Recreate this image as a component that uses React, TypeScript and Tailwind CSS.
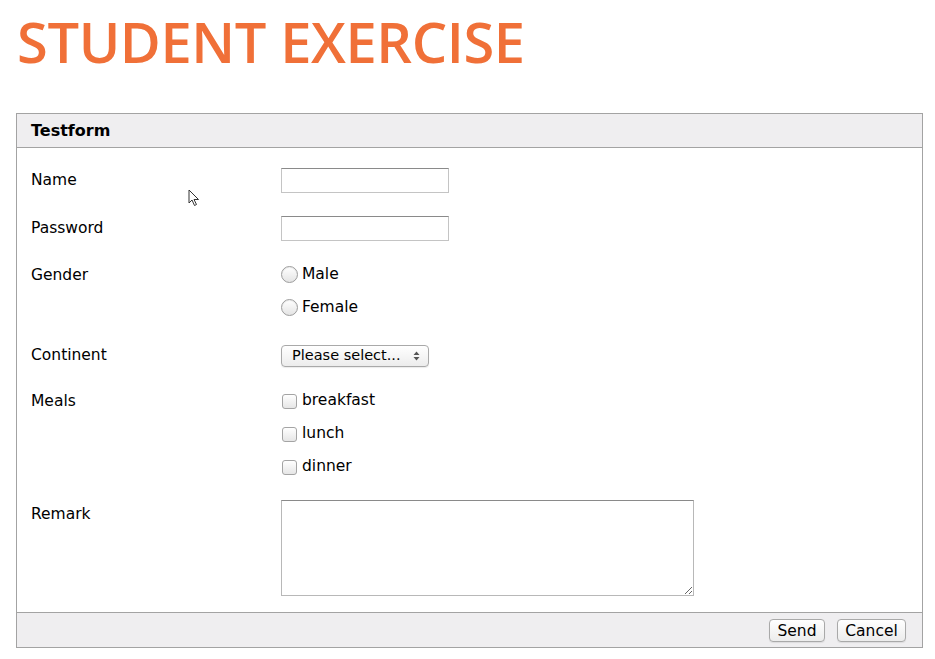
import React from "react";

const labelCls = "w-[250px] shrink-0 text-[15.5px] text-black";

function Radio({ label }: { label: string }) {
  return (
    <label className="flex h-[24px] items-center">
      <span className="-mt-[1px] h-[17px] w-[17px] rounded-full border border-[#9c9c9c] bg-gradient-to-b from-white to-[#e4e4e4] shadow-[inset_0_1px_1px_rgba(0,0,0,0.08)]" />
      <span className="ml-[4px] text-[15.5px] text-black">{label}</span>
    </label>
  );
}

function Check({ label }: { label: string }) {
  return (
    <label className="flex h-[24px] items-center">
      <span className="ml-[1px] h-[15px] w-[15px] rounded-[3px] border border-[#a4a4a4] bg-gradient-to-b from-white to-[#e6e6e6]" />
      <span className="ml-[5px] text-[15.5px] text-black">{label}</span>
    </label>
  );
}

function Cursor() {
  return (
    <svg className="absolute left-[188px] top-[189px]" width="12" height="18" viewBox="0 0 12 18">
      <path d="M1 1 L1 14 L4 11 L6.5 16.5 L8.5 15.5 L6 10.5 L10.5 10.5 Z" fill="white" stroke="#333" strokeWidth="1" strokeLinejoin="round" />
    </svg>
  );
}

export default function App() {
  return (
    <div className="relative h-[659px] w-[935px] bg-white font-['DejaVu_Sans',sans-serif]">
      <h1 className="pl-[17px] pt-[5px] font-['Open_Sans',sans-serif] text-[56px] font-semibold leading-[72px] tracking-[-0.4px] text-[#f07038]">
        STUDENT EXERCISE
      </h1>

      <div className="ml-[16px] mt-[36px] w-[907px] border border-[#a3a3a3]">
        <div className="flex h-[34px] items-center border-b border-[#a3a3a3] bg-[#efeef0] pl-[14px] text-[16px] font-bold text-black">
          Testform
        </div>

        <div className="pl-[14px] pt-[20px]">
          <div className="flex h-[25px] items-center">
            <span className={labelCls}>Name</span>
            <input className="h-[25px] w-[168px] border border-[#c4c4c4] border-t-[#8a8a8a] bg-white outline-none" />
          </div>

          <div className="mt-[23px] flex h-[25px] items-center">
            <span className={labelCls}>Password</span>
            <input type="password" className="h-[25px] w-[168px] border border-[#c4c4c4] border-t-[#8a8a8a] bg-white outline-none" />
          </div>

          <div className="mt-[22px] flex">
            <span className={`${labelCls} leading-[24px]`}>Gender</span>
            <div className="flex flex-col gap-[9px]">
              <Radio label="Male" />
              <Radio label="Female" />
            </div>
          </div>

          <div className="mt-[25px] flex h-[22px] items-center">
            <span className={labelCls}>Continent</span>
            <div className="flex h-[22px] w-[148px] items-center justify-between rounded-[4px] border border-[#a9a9a9] bg-gradient-to-b from-white to-[#ececec] pl-[10px] pr-[8px] text-[14.5px] text-black shadow-[0_1px_1px_rgba(0,0,0,0.08)]">
              <span>Please select...</span>
              <svg width="7" height="10" viewBox="0 0 7 10">
                <path d="M0.5 4 L3.5 0.5 L6.5 4 Z M0.5 6 L3.5 9.5 L6.5 6 Z" fill="#555" />
              </svg>
            </div>
          </div>

          <div className="mt-[22px] flex">
            <span className={`${labelCls} leading-[24px]`}>Meals</span>
            <div className="flex flex-col gap-[9px]">
              <Check label="breakfast" />
              <Check label="lunch" />
              <Check label="dinner" />
            </div>
          </div>

          <div className="mt-[21px] flex pb-[16px]">
            <span className={`${labelCls} pt-[3px]`}>Remark</span>
            <textarea className="h-[96px] w-[413px] resize border border-[#b8b8b8] border-t-[#8a8a8a] bg-white outline-none" />
          </div>
        </div>

        <div className="flex h-[35px] items-center justify-end gap-[12px] border-t border-[#a3a3a3] bg-[#efeef0] pr-[16px]">
          <button className="h-[23px] w-[56px] rounded-[4px] border border-[#a9a9a9] bg-gradient-to-b from-white to-[#ececec] text-[15.5px] text-black shadow-[0_1px_1px_rgba(0,0,0,0.08)]">
            Send
          </button>
          <button className="h-[23px] w-[69px] rounded-[4px] border border-[#a9a9a9] bg-gradient-to-b from-white to-[#ececec] text-[15.5px] text-black shadow-[0_1px_1px_rgba(0,0,0,0.08)]">
            Cancel
          </button>
        </div>
      </div>

      <Cursor />
    </div>
  );
}
